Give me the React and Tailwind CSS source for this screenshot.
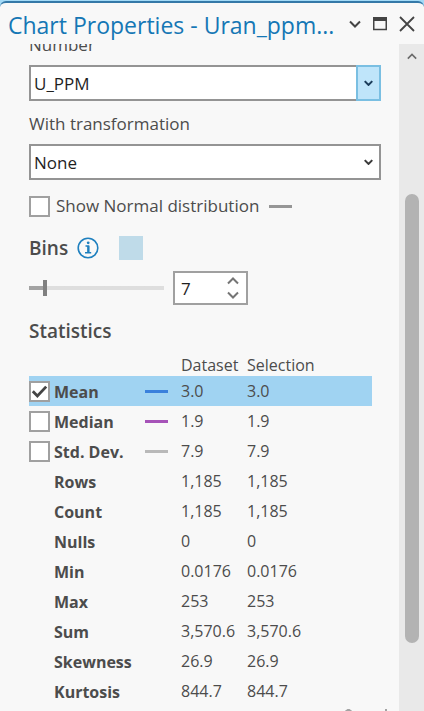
import { useState } from "react";

const series = [
  { name: "Mean", value: "3.0", line: "bg-[#3a80dc]" },
  { name: "Median", value: "1.9", line: "bg-[#a653b8]" },
  { name: "Std. Dev.", value: "7.9", line: "bg-[#b9b9b9]" },
  { name: "Rows", value: "1,185" },
  { name: "Count", value: "1,185" },
  { name: "Nulls", value: "0" },
  { name: "Min", value: "0.0176" },
  { name: "Max", value: "253" },
  { name: "Sum", value: "3,570.6" },
  { name: "Skewness", value: "26.9" },
  { name: "Kurtosis", value: "844.7" },
];

function Chevron({ up = false, className = "", width = 2 }) {
  return (
    <svg viewBox="0 0 12 8" className={className} fill="none" stroke="currentColor" strokeWidth={width} aria-hidden="true">
      <path d={up ? "M1 6.5 6 1.5 11 6.5" : "M1 1.5 6 6.5 11 1.5"} />
    </svg>
  );
}

function Tick({ id, defaultChecked, label }) {
  return (
    <span className="grid size-[21px] shrink-0">
      <input
        id={id}
        type="checkbox"
        aria-label={label}
        defaultChecked={defaultChecked}
        className="peer col-start-1 row-start-1 size-[21px] appearance-none border-2 border-[#a0a0a0] bg-white"
      />
      <svg
        viewBox="0 0 21 21"
        className="pointer-events-none invisible col-start-1 row-start-1 size-[21px] text-[#444] peer-checked:visible"
        fill="none"
        stroke="currentColor"
        strokeWidth="2.8"
        aria-hidden="true"
      >
        <path d="M3.8 10.2 8.4 15 17.2 5.6" />
      </svg>
    </span>
  );
}

function Combo({ id, value, active }) {
  return (
    <div className="grid h-9 grid-cols-[1fr_25px]">
      <select
        id={id}
        defaultValue={value}
        className="col-span-2 col-start-1 row-start-1 h-9 w-full appearance-none border-2 border-[#949494] bg-white px-[3px] pt-[2px] text-[17px] leading-6 text-[#1f1f1f]"
      >
        <option>{value}</option>
      </select>
      <span
        className={
          active
            ? "pointer-events-none col-start-2 row-start-1 flex items-center justify-center border-2 border-[#7abfe2] bg-[#bfe5fa] text-[#1d3f5c]"
            : "pointer-events-none col-start-2 row-start-1 flex items-center justify-center text-[#3c3c3c]"
        }
      >
        <Chevron className="h-[6px] w-[9px]" width={2.8} />
      </span>
    </div>
  );
}

export default function App() {
  const [bins, setBins] = useState(7);

  return (
    <div className="h-screen bg-[#a3daf7] pt-px">
      <div className="flex h-full flex-col overflow-hidden rounded-t-md border-t-2 border-[#3579a8] bg-[#f8f8f8] font-['Open_Sans','Noto_Sans',sans-serif] text-[#4c4c4c]">
        <header className="flex h-[41px] shrink-0 items-center justify-between pr-[9px] pl-2 text-[#444]">
          <h1 className="pt-[2px] text-[23px] leading-8 whitespace-nowrap text-[#1577b5]">Chart Properties - Uran_ppm...</h1>
          <div className="flex shrink-0 items-center gap-3">
            <button type="button" aria-label="Window options">
              <Chevron className="h-2 w-3" />
            </button>
            <button type="button" aria-label="Maximize">
              <svg viewBox="0 0 14 14" className="size-[14px]" aria-hidden="true">
                <path d="M.75 1h12.5v11.5H.75z" fill="none" stroke="currentColor" strokeWidth="1.5" />
                <path d="M0 0h14v4H0z" fill="currentColor" />
              </svg>
            </button>
            <button type="button" aria-label="Close">
              <svg viewBox="0 0 16 16" className="size-4" fill="none" stroke="currentColor" strokeWidth="1.8" aria-hidden="true">
                <path d="M1 1l14 14M15 1 1 15" />
              </svg>
            </button>
          </div>
        </header>

        <div className="flex min-h-0 flex-1">
          <main className="flex min-w-0 flex-1 flex-col overflow-hidden pr-[18px] pl-[29px]">
            <label htmlFor="number" className="-mt-[11px] block text-[17px] leading-6">
              Number
            </label>
            <div className="mt-2">
              <Combo id="number" value="U_PPM" active />
            </div>
            <label htmlFor="transformation" className="mt-[11px] block text-[17px] leading-6">
              With transformation
            </label>
            <div className="mt-2">
              <Combo id="transformation" value="None" />
            </div>

            <div className="mt-[14px] flex h-6 items-center">
              <Tick id="normal" />
              <label htmlFor="normal" className="ml-[6px] text-[17px] leading-6 whitespace-nowrap">
                Show Normal distribution
              </label>
              <span className="ml-[10px] h-[3px] w-[23px] bg-[#969696]" />
            </div>

            <div className="mt-4 flex h-7 items-center">
              <h2 className="text-[19px] leading-7 font-semibold">Bins</h2>
              <button type="button" aria-label="About bins" className="ml-[9px] text-[#1f80bf]">
                <svg viewBox="0 0 22 22" className="size-[22px]" fill="none" stroke="currentColor" aria-hidden="true">
                  <circle cx="11" cy="11" r="9.8" strokeWidth="1.6" />
                  <path d="M8.5 9h3v6.2M8 15.7h6.2" strokeWidth="1.6" />
                  <path d="M11.3 9v6.5" strokeWidth="2.2" />
                  <circle cx="11.2" cy="5.8" r="1.4" fill="currentColor" stroke="none" />
                </svg>
              </button>
              <button type="button" aria-label="Bar color" className="ml-5 size-6 bg-[#bfdbe9]" />
            </div>

            <div className="mt-[9px] flex items-center gap-[9px]">
              <input
                type="range"
                aria-label="Number of bins"
                min="0"
                max="64"
                value={bins}
                onChange={(e) => setBins(Number(e.target.value))}
                className="h-4 w-[135px] appearance-none bg-transparent [&::-webkit-slider-runnable-track]:h-1 [&::-webkit-slider-runnable-track]:bg-linear-to-r [&::-webkit-slider-runnable-track]:from-[#a3a3a3] [&::-webkit-slider-runnable-track]:from-12% [&::-webkit-slider-runnable-track]:to-[#dedede] [&::-webkit-slider-runnable-track]:to-12% [&::-webkit-slider-thumb]:-mt-[6px] [&::-webkit-slider-thumb]:h-4 [&::-webkit-slider-thumb]:w-1 [&::-webkit-slider-thumb]:appearance-none [&::-webkit-slider-thumb]:bg-[#808080]"
              />
              <div className="flex h-[34px] w-[75px] border-2 border-[#a0a0a0] bg-white">
                <input
                  type="text"
                  inputMode="numeric"
                  aria-label="Bins"
                  value={bins}
                  onChange={(e) => setBins(Number(e.target.value) || 0)}
                  className="w-11 pt-[2px] pl-[6px] text-[17px] leading-6 text-[#1f1f1f]"
                />
                <div className="flex flex-1 flex-col items-center justify-between py-1 text-[#757575]">
                  <button type="button" aria-label="More bins" className="flex" onClick={() => setBins(bins + 1)}>
                    <Chevron up className="h-2 w-3" />
                  </button>
                  <button type="button" aria-label="Fewer bins" className="flex" onClick={() => setBins(bins - 1)}>
                    <Chevron className="h-2 w-3" />
                  </button>
                </div>
              </div>
            </div>

            <h2 className="mt-3 text-[19px] leading-7 font-semibold">Statistics</h2>

            <table className="mt-2 w-[343px] table-fixed border-collapse text-left text-base leading-6">
              <colgroup>
                <col className="w-[25px]" />
                <col className="w-[91px]" />
                <col className="w-9" />
                <col className="w-[66px]" />
                <col />
              </colgroup>
              <thead>
                <tr className="h-[23px] leading-[21px]">
                  <td colSpan={3} />
                  <th className="pt-[2px] font-normal">Dataset</th>
                  <th className="pt-[2px] font-normal">Selection</th>
                </tr>
              </thead>
              <tbody>
                {series.map((row, i) => (
                  <tr key={row.name} className={i === 0 ? "h-[30px] bg-[#a0d3f2]" : "h-[30px]"}>
                    <td>{row.line && <Tick label={row.name} defaultChecked={i === 0} />}</td>
                    <th scope="row" className="pt-[2px] font-bold whitespace-nowrap">
                      {row.name}
                    </th>
                    <td>{row.line && <span className={`block h-[3px] w-[23px] ${row.line}`} />}</td>
                    <td>{row.value}</td>
                    <td>{row.value}</td>
                  </tr>
                ))}
              </tbody>
            </table>

            <div className="-mr-2 mt-[3px] flex shrink-0 justify-end">
              <button type="button" aria-label="Table options" className="text-[#a3a3a3]">
                <svg viewBox="0 0 52 12" className="h-3 w-[52px]" fill="none" stroke="currentColor" strokeWidth="2" aria-hidden="true">
                  <path d="M4 6 11.5 .5 19 6M49 0v10" />
                </svg>
              </button>
            </div>
          </main>

          <div className="flex w-[25px] shrink-0 flex-col items-center bg-[#e9e9e9]">
            <button type="button" aria-label="Scroll up" className="flex h-6 shrink-0 items-center text-[#6c6c6c]">
              <Chevron up className="h-[7px] w-[10px]" />
            </button>
            <div className="grow-[126]" />
            <div className="w-[14px] grow-[449] rounded-full bg-[#b3b3b3]" />
            <div className="grow-[68]" />
          </div>
        </div>
      </div>
    </div>
  );
}
